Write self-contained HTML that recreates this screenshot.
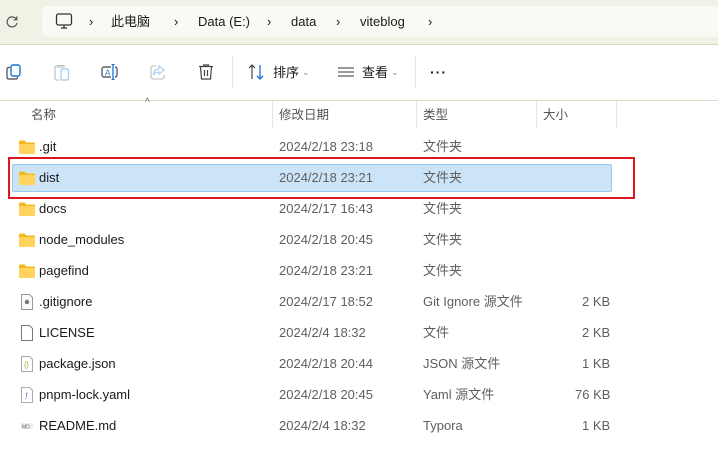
<!DOCTYPE html>
<html><head><meta charset="utf-8"><style>
*{margin:0;padding:0;box-sizing:border-box}
body{width:718px;height:472px;background:#fff;font-family:"Liberation Sans","Noto Sans CJK SC",sans-serif;font-size:13px;color:#1a1a1a;position:relative;overflow:hidden}
.abs{position:absolute}
.top{left:0;top:0;width:718px;height:45px;background:#eef3e5;border-bottom:1px solid #cfdcbf}
.addr{left:42px;top:6px;width:680px;height:31px;background:#f8faf3;border-radius:5px}
.t{position:absolute;white-space:nowrap;line-height:16px}
.hdr{color:#555;font-size:12.5px}
.sep{position:absolute;top:101px;width:1px;height:27px;background:#e5e5e5}
.g{color:#5f5f5f}
</style></head><body>
<div class="abs top"></div>
<div class="abs addr"></div>
<svg class="abs" style="left:4px;top:14px" width="16" height="16" viewBox="0 0 16 16"><path d="M12.5 5.5A5 5 0 1 0 13 9" fill="none" stroke="#555" stroke-width="1.2"/><path d="M12.8 2.5v3.3H9.5" fill="none" stroke="#555" stroke-width="1.2"/></svg>
<svg class="abs" style="left:55px;top:13px" width="18" height="17" viewBox="0 0 18 17"><rect x="1.5" y="1" width="15" height="11" rx="2" fill="none" stroke="#333" stroke-width="1.3"/><path d="M6 15h6M9 12v3" stroke="#333" stroke-width="1.3"/></svg>
<div class="t" style="left:89px;top:14px">›</div>
<div class="t" style="left:111px;top:14px">此电脑</div>
<div class="t" style="left:174px;top:14px">›</div>
<div class="t" style="left:198px;top:14px">Data (E:)</div>
<div class="t" style="left:267px;top:14px">›</div>
<div class="t" style="left:291px;top:14px">data</div>
<div class="t" style="left:336px;top:14px">›</div>
<div class="t" style="left:360px;top:14px">viteblog</div>
<div class="t" style="left:428px;top:14px">›</div>
<!-- toolbar -->
<svg class="abs" style="left:6px;top:64px" width="16" height="16" viewBox="0 0 16 16"><path d="M4 3.5H2.5a1.5 1.5 0 0 0-1.5 1.5v8.5a1.5 1.5 0 0 0 1.5 1.5H10a1.5 1.5 0 0 0 1.5-1.5V13" fill="none" stroke="#444" stroke-width="1.2"/><rect x="5" y="1" width="9" height="11" rx="2" fill="none" stroke="#1a73d9" stroke-width="1.4"/></svg>
<svg class="abs" style="left:54px;top:63px" width="16" height="18" viewBox="0 0 16 18"><path d="M4 3H2.5A1.5 1.5 0 0 0 1 4.5v11A1.5 1.5 0 0 0 2.5 17H6M4 2.5h6V4H4z" fill="none" stroke="#bbb" stroke-width="1.1"/><rect x="7" y="6" width="7.5" height="11" rx="1.5" fill="none" stroke="#9ccbf3" stroke-width="1.2"/></svg>
<svg class="abs" style="left:101px;top:64px" width="18" height="16" viewBox="0 0 18 16"><rect x="1" y="3" width="15" height="10" rx="2" fill="none" stroke="#444" stroke-width="1.2"/><rect x="10" y="1" width="4" height="14" fill="#fff"/><path d="M12 0v16M10.5 0.5h3M10.5 15.5h3" stroke="#1a73d9" stroke-width="1.3"/><text x="4" y="11.5" font-size="8" fill="#1a73d9" font-family="Liberation Sans">A</text></svg>
<svg class="abs" style="left:150px;top:64px" width="16" height="16" viewBox="0 0 16 16"><path d="M6 2H3a2 2 0 0 0-2 2v9a2 2 0 0 0 2 2h9a2 2 0 0 0 2-2v-2" fill="none" stroke="#bbb" stroke-width="1.1"/><path d="M9 2l5 4-5 4V8c-3 0-4.5 1-5.5 3 0-4 2-6 5.5-6z" fill="none" stroke="#9ccbf3" stroke-width="1.1"/></svg>
<svg class="abs" style="left:198px;top:63px" width="16" height="18" viewBox="0 0 16 18"><path d="M1 3.5h14M5.5 3.5V2h5v1.5M2.5 3.5l1 12.5h9l1-12.5M6.5 7v6M9.5 7v6" fill="none" stroke="#444" stroke-width="1.2"/></svg>
<div class="abs" style="left:232px;top:57px;width:1px;height:32px;background:#e5e5e5"></div>
<svg class="abs" style="left:248px;top:64px" width="17" height="16" viewBox="0 0 17 16"><path d="M4 15V1M1 4l3-3 3 3M12 1v14M9 12l3 3 3-3" fill="none" stroke="#333" stroke-width="1.1"/><path d="M12 1v14M9 12l3 3 3-3" fill="none" stroke="#1a73d9" stroke-width="1.2"/></svg>
<div class="t" style="left:273px;top:65px">排序</div>
<div class="t" style="left:302px;top:64px;font-size:9px;color:#888">⌄</div>
<svg class="abs" style="left:338px;top:67px" width="16" height="10" viewBox="0 0 16 10"><path d="M0 1h16M0 5h16M0 9h16" stroke="#333" stroke-width="1"/></svg>
<div class="t" style="left:362px;top:65px">查看</div>
<div class="t" style="left:391px;top:64px;font-size:9px;color:#888">⌄</div>
<div class="abs" style="left:415px;top:57px;width:1px;height:32px;background:#e5e5e5"></div>
<div class="t" style="left:430px;top:64px;font-size:14px;font-weight:bold;letter-spacing:1px">···</div>
<div class="abs" style="left:0;top:100px;width:718px;height:1px;background:#d3dfc6"></div>
<!-- headers -->
<div class="t" style="left:145px;top:95px;font-size:10px;color:#666">^</div>
<div class="t hdr" style="left:31px;top:107px">名称</div>
<div class="sep" style="left:272px"></div>
<div class="t hdr" style="left:279px;top:107px">修改日期</div>
<div class="sep" style="left:416px"></div>
<div class="t hdr" style="left:423px;top:107px">类型</div>
<div class="sep" style="left:536px"></div>
<div class="t hdr" style="left:543px;top:107px">大小</div>
<div class="sep" style="left:616px"></div>
<!-- selection -->
<div class="abs" style="left:12px;top:164px;width:600px;height:28px;background:#cce4f8;border:1px solid #99c9ef;border-radius:2px"></div>
<div class="abs" style="left:8px;top:157px;width:627px;height:42px;border:2px solid #e0161e"></div>
<div id="rows"></div>
<script></script>
<!-- rows -->
<div style="position:absolute;left:0;top:0">
<svg class="abs" style="left:19px;top:140px" width="16" height="14"><path d="M0 2a1.5 1.5 0 0 1 1.5-1.5h4l2 2H15a1 1 0 0 1 1 1V13a1 1 0 0 1-1 1H1a1 1 0 0 1-1-1z" fill="#f3b81f"/><rect x="0" y="4" width="16" height="10" rx="1" fill="#ffd35c"/></svg>
<svg class="abs" style="left:19px;top:171px" width="16" height="14"><path d="M0 2a1.5 1.5 0 0 1 1.5-1.5h4l2 2H15a1 1 0 0 1 1 1V13a1 1 0 0 1-1 1H1a1 1 0 0 1-1-1z" fill="#f3b81f"/><rect x="0" y="4" width="16" height="10" rx="1" fill="#ffd35c"/></svg>
<svg class="abs" style="left:19px;top:202px" width="16" height="14"><path d="M0 2a1.5 1.5 0 0 1 1.5-1.5h4l2 2H15a1 1 0 0 1 1 1V13a1 1 0 0 1-1 1H1a1 1 0 0 1-1-1z" fill="#f3b81f"/><rect x="0" y="4" width="16" height="10" rx="1" fill="#ffd35c"/></svg>
<svg class="abs" style="left:19px;top:233px" width="16" height="14"><path d="M0 2a1.5 1.5 0 0 1 1.5-1.5h4l2 2H15a1 1 0 0 1 1 1V13a1 1 0 0 1-1 1H1a1 1 0 0 1-1-1z" fill="#f3b81f"/><rect x="0" y="4" width="16" height="10" rx="1" fill="#ffd35c"/></svg>
<svg class="abs" style="left:19px;top:264px" width="16" height="14"><path d="M0 2a1.5 1.5 0 0 1 1.5-1.5h4l2 2H15a1 1 0 0 1 1 1V13a1 1 0 0 1-1 1H1a1 1 0 0 1-1-1z" fill="#f3b81f"/><rect x="0" y="4" width="16" height="10" rx="1" fill="#ffd35c"/></svg>
<svg class="abs" style="left:21px;top:294px" width="12" height="16"><path d="M0.5 0.5h8l3 3v12h-11z" fill="#fafafa" stroke="#999"/><circle cx="6" cy="8" r="2.2" fill="#777"/></svg>
<svg class="abs" style="left:21px;top:325px" width="12" height="16"><path d="M0.5 0.5h8l3 3v12h-11z" fill="#fff" stroke="#777"/></svg>
<svg class="abs" style="left:21px;top:356px" width="12" height="16"><path d="M0.5 0.5h8l3 3v12h-11z" fill="#fff" stroke="#aaa"/><text x="3" y="11" font-size="7" fill="#9a3">{}</text></svg>
<svg class="abs" style="left:21px;top:387px" width="12" height="16"><path d="M0.5 0.5h8l3 3v12h-11z" fill="#fff" stroke="#aaa"/><text x="4" y="12" font-size="9" fill="#84c" font-style="italic">!</text></svg>
<svg class="abs" style="left:21px;top:419px" width="12" height="14"><rect x="0" y="4" width="12" height="6" fill="#eee"/><text x="1" y="9.5" font-size="5" fill="#666">MD</text></svg>
<div class="t" style="left:39px;top:139px">.git</div><div class="t g" style="left:279px;top:139px">2024/2/18 23:18</div><div class="t g" style="left:423px;top:139px">文件夹</div>
<div class="t" style="left:39px;top:170px">dist</div><div class="t g" style="left:279px;top:170px">2024/2/18 23:21</div><div class="t g" style="left:423px;top:170px">文件夹</div>
<div class="t" style="left:39px;top:201px">docs</div><div class="t g" style="left:279px;top:201px">2024/2/17 16:43</div><div class="t g" style="left:423px;top:201px">文件夹</div>
<div class="t" style="left:39px;top:232px">node_modules</div><div class="t g" style="left:279px;top:232px">2024/2/18 20:45</div><div class="t g" style="left:423px;top:232px">文件夹</div>
<div class="t" style="left:39px;top:263px">pagefind</div><div class="t g" style="left:279px;top:263px">2024/2/18 23:21</div><div class="t g" style="left:423px;top:263px">文件夹</div>
<div class="t" style="left:39px;top:294px">.gitignore</div><div class="t g" style="left:279px;top:294px">2024/2/17 18:52</div><div class="t g" style="left:423px;top:294px">Git Ignore 源文件</div><div class="t g" style="left:582px;top:294px">2 KB</div>
<div class="t" style="left:39px;top:325px">LICENSE</div><div class="t g" style="left:279px;top:325px">2024/2/4 18:32</div><div class="t g" style="left:423px;top:325px">文件</div><div class="t g" style="left:582px;top:325px">2 KB</div>
<div class="t" style="left:39px;top:356px">package.json</div><div class="t g" style="left:279px;top:356px">2024/2/18 20:44</div><div class="t g" style="left:423px;top:356px">JSON 源文件</div><div class="t g" style="left:582px;top:356px">1 KB</div>
<div class="t" style="left:39px;top:387px">pnpm-lock.yaml</div><div class="t g" style="left:279px;top:387px">2024/2/18 20:45</div><div class="t g" style="left:423px;top:387px">Yaml 源文件</div><div class="t g" style="left:575px;top:387px">76 KB</div>
<div class="t" style="left:39px;top:418px">README.md</div><div class="t g" style="left:279px;top:418px">2024/2/4 18:32</div><div class="t g" style="left:423px;top:418px">Typora</div><div class="t g" style="left:582px;top:418px">1 KB</div>
</div>
</body></html>
